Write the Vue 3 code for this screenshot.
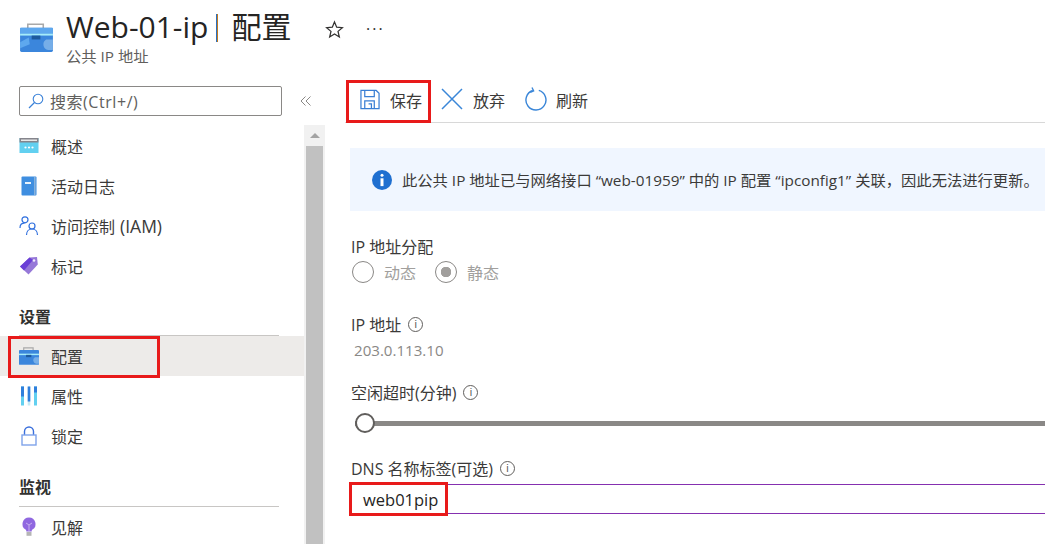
<script setup>
const topItems = [
  { label: '概述', icon: 'overview' },
  { label: '活动日志', icon: 'log' },
  { label: '访问控制', suffix: '(IAM)', icon: 'iam' },
  { label: '标记', icon: 'tag' }
]
const settings = [
  { label: '配置', icon: 'config', active: true },
  { label: '属性', icon: 'props' },
  { label: '锁定', icon: 'lock' }
]
</script>

<template>
  <div class="page">
    <header class="head">
      <svg class="head-icon" viewBox="0 0 34 30">
        <path d="M8 6V1.200h16V6" fill="none" stroke="#a9a9a9" stroke-width="1.600" />
        <rect x="0" y="5" width="34" height="25" rx="1.500" fill="#3b86dc" />
        <rect x="0" y="5" width="34" height="6" fill="#5ea8ee" />
        <rect x="0" y="11" width="34" height="2" fill="#a5ecfa" />
        <path d="M27 17h7v11h-5a6 6 0 0 1-2-11z" fill="#76aee8" />
        <path d="M0 20l9-5 1 7-10 4z" fill="#5ea8ee" />
        <rect x="12" y="13" width="9" height="4" fill="#1d5a9e" />
      </svg>
      <div class="head-text">
        <h1 class="title">Web-01-ip<span class="bar"></span>配置</h1>
        <div class="subtitle">公共 IP 地址</div>
      </div>
      <svg class="star" viewBox="0 0 20 20">
        <path d="M10 2l2.300 5.600 6 .5-4.600 3.900 1.400 5.900L10 14.800l-5.100 3.100 1.400-5.900L1.700 8.100l6-.5z" fill="none" stroke="#323130" stroke-width="1.300" />
      </svg>
      <span class="more">···</span>
    </header>

    <div class="body">
      <aside class="side">
        <div class="search-row">
          <div class="search">
            <svg class="search-icon" viewBox="0 0 16 16">
              <circle cx="10" cy="6" r="4.800" fill="none" stroke="#3b82d8" stroke-width="1.100" />
              <path d="M6.500 9.500L1 15" stroke="#3b82d8" stroke-width="1.200" />
            </svg>
            <span>搜索(Ctrl+/)</span>
          </div>
          <svg class="collapse" viewBox="0 0 12 12">
            <path d="M5.500 1.500L1 6l4.500 4.500M10.500 1.500L6 6l4.500 4.500" fill="none" stroke="#8a8886" stroke-width="1" />
          </svg>
        </div>
        <div class="side-low">
          <nav class="nav">
            <a v-for="it in topItems" :key="it.label" class="item">
              <span class="ic">
                <svg v-if="it.icon === 'overview'" width="20" height="20" viewBox="0 0 20 20">
                  <rect x="0.500" y="2" width="19" height="15" fill="#62d0f0" />
                  <rect x="0.500" y="2" width="19" height="4.500" fill="#85858c" />
                  <rect x="2" y="3.500" width="16" height="1.500" fill="#e8e8e8" />
                  <circle cx="6.500" cy="11.500" r="1.100" fill="#fff" /><circle cx="10" cy="11.500" r="1.100" fill="#fff" /><circle cx="13.500" cy="11.500" r="1.100" fill="#fff" />
                </svg>
                <svg v-else-if="it.icon === 'log'" width="20" height="20" viewBox="0 0 20 20">
                  <rect x="2.500" y="0.500" width="15" height="19" rx="1" fill="#3f8ee0" />
                  <path d="M15.800 1v18" stroke="#8fb6dc" stroke-width="1.400" />
                  <rect x="6" y="6" width="6" height="2" fill="#e8f2fb" />
                </svg>
                <svg v-else-if="it.icon === 'iam'" width="20" height="20" viewBox="0 0 20 20">
                  <g fill="none" stroke="#2f6fde" stroke-width="1.200">
                    <circle cx="6" cy="3.800" r="3" /><circle cx="13" cy="10" r="3" />
                    <path d="M1 12c0-3 2-4.800 4.500-4.800M7.500 19c0-3.500 2.300-6 5.500-6s5.500 2.500 5.500 6" />
                  </g>
                </svg>
                <svg v-else width="20" height="20" viewBox="0 0 20 20">
                  <path d="M1 10.500L10.500 1.500 18 1l.8 7.500L9.500 18.500z" fill="#9678d8" />
                  <path d="M1 10.500L10.500 1.500 14 4 5 14.500z" fill="#6a3fd6" />
                  <circle cx="15" cy="4.500" r="1.300" fill="#efe9fb" />
                </svg>
              </span>
              <span>{{ it.label }}</span>
              <span v-if="it.suffix" class="lat">{{ it.suffix }}</span>
            </a>

            <div class="section first">设置</div>
            <a v-for="it in settings" :key="it.label" class="item" :class="{ active: it.active }">
              <span class="ic">
                <svg v-if="it.icon === 'config'" width="20" height="18" viewBox="0 0 34 30">
                  <path d="M8 6V1.200h16V6" fill="none" stroke="#a9a9a9" stroke-width="2" />
                  <rect x="0" y="5" width="34" height="25" rx="1.500" fill="#3b86dc" />
                  <rect x="0" y="11" width="34" height="2.500" fill="#a5ecfa" />
                  <path d="M27 17h7v11h-5a6 6 0 0 1-2-11z" fill="#76aee8" />
                  <rect x="12" y="13" width="9" height="4" fill="#1d5a9e" />
                </svg>
                <svg v-else-if="it.icon === 'props'" width="20" height="20" viewBox="0 0 20 20">
                  <rect x="2" y="0.500" width="3" height="19" fill="#62d0f0" /><rect x="2" y="0.500" width="3" height="10" fill="#2f7fdc" />
                  <rect x="8.700" y="0.500" width="2.600" height="19" fill="#c5e9f5" /><rect x="8.700" y="0.500" width="2.600" height="15" fill="#2f7fdc" />
                  <rect x="15" y="0.500" width="3" height="19" fill="#62d0f0" /><rect x="15" y="0.500" width="3" height="6" fill="#2f7fdc" />
                </svg>
                <svg v-else width="20" height="20" viewBox="0 0 20 20">
                  <path d="M5.500 9V5.500a4.500 4.500 0 0 1 9 0V9" fill="none" stroke="#3a6fdc" stroke-width="1.400" />
                  <rect x="3" y="9" width="14" height="10" fill="#fff" stroke="#7fa3ea" stroke-width="1.400" />
                </svg>
              </span>
              <span>{{ it.label }}</span>
              <i v-if="it.active" class="red red-nav"></i>
            </a>

            <div class="section second">监视</div>
            <a class="item">
              <span class="ic">
                <svg width="20" height="20" viewBox="0 0 20 20">
                  <path d="M10 .5a6.500 6.500 0 0 0-3.500 12c.6.400.8 1 .8 2h5.400c0-1 .2-1.600.8-2A6.500 6.500 0 0 0 10 .5z" fill="#9068e0" />
                  <path d="M7 6l3 2 3-2M10 8v6" fill="none" stroke="#cdb8f0" stroke-width=".9" />
                  <rect x="7.500" y="15" width="5" height="3.800" fill="#b5b5b5" />
                </svg>
              </span>
              <span>见解</span>
            </a>
          </nav>
          <div class="scrollbar">
            <div class="arrow"><i></i></div>
            <div class="thumb"></div>
          </div>
        </div>
      </aside>

      <main class="main">
        <div class="toolbar">
          <button class="tool save">
            <svg width="20" height="21" viewBox="0 0 21 21">
              <g fill="none" stroke="#3a7fd4" stroke-width="1.300">
                <path d="M1 1h16l3 3v16H1z" /><path d="M5 1v6.500h10V1M5 20v-8h10v8M9 15h3v5" />
              </g>
            </svg>
            <span class="tool-text">保存</span>
            <i class="red red-save"></i>
          </button>
          <button class="tool">
            <svg width="22" height="22" viewBox="0 0 22 22">
              <path d="M1 1l20 20M21 1L1 21" stroke="#3a86d8" stroke-width="1.500" />
            </svg>
            <span class="tool-text">放弃</span>
          </button>
          <button class="tool refresh">
            <svg width="22" height="24" viewBox="0 0 22 24">
              <path d="M13.800 3.400a10 10 0 1 1-6 .1" fill="none" stroke="#3a86d8" stroke-width="1.400" />
              <path d="M7 0.500l1.600 3.300-3.300 1.500" fill="none" stroke="#3a86d8" stroke-width="1.400" />
            </svg>
            <span class="tool-text">刷新</span>
          </button>
        </div>

        <div class="content">
          <div class="info">
            <svg width="20" height="20" viewBox="0 0 20 20">
              <circle cx="10" cy="10" r="10" fill="#1f6fd0" />
              <circle cx="10" cy="5.300" r="1.500" fill="#fff" />
              <rect x="8.500" y="8.300" width="3" height="7.800" fill="#fff" />
            </svg>
            <span class="info-text">此公共 IP 地址已与网络接口 “web-01959” 中的 IP 配置 “ipconfig1” 关联，因此无法进行更新。</span>
          </div>

          <label class="field-label l-alloc">IP 地址分配</label>
          <div class="radios">
            <span class="radio"><i class="dot"></i>动态</span>
            <span class="radio"><i class="dot on"></i>静态</span>
          </div>

          <label class="field-label l-ip">IP 地址 <i class="tip">i</i></label>
          <div class="ip-value">203.0.113.10</div>

          <label class="field-label l-idle">空闲超时(分钟) <i class="tip">i</i></label>
          <div class="slider"><i class="knob"></i></div>

          <label class="field-label l-dns">DNS 名称标签(可选) <i class="tip">i</i></label>
          <div class="dns-input">
            <span>web01pip</span>
            <i class="red red-dns"></i>
          </div>
        </div>
      </main>
    </div>
  </div>
</template>

<style>
html, body { margin: 0; background: #fff; }
</style>

<style scoped>
.page {
  width: 1045px;
  height: 544px;
  overflow: hidden;
  background: #fff;
  color: #323130;
  font-family: "Open Sans", "Noto Sans CJK SC", sans-serif;
  font-size: 16px;
}
.head {
  height: 76px;
  display: flex;
  align-items: flex-start;
  padding-left: 20px;
  box-sizing: border-box;
}
.head-icon { width: 33px; height: 29px; margin-top: 23px; flex: none; }
.head-text { margin-left: 13px; width: 250px; flex: none; }
.title {
  margin: 8px 0 0;
  font-size: 30px;
  line-height: 38px;
  font-weight: 400;
  color: #252423;
  white-space: nowrap;
}
.bar { display: inline-block; width: 2px; height: 28px; background: linear-gradient(90deg, #2a6fc0 50%, #c07a20 50%); vertical-align: -4px; margin: 0 13px 0 8px; }
.subtitle { font-size: 15.300px; line-height: 20px; color: #605e5c; }
.star { width: 19px; height: 19px; margin: 20px 0 0 9px; flex: none; }
.more { margin: 19px 0 0 22px; font-size: 16px; line-height: 20px; letter-spacing: 2px; color: #323130; }

.body { display: flex; height: 468px; }
.side { width: 325px; flex: none; display: flex; flex-direction: column; }
.search-row { height: 49px; padding: 10px 0 0 19px; box-sizing: border-box; display: flex; align-items: flex-start; }
.search {
  width: 263px;
  height: 30px;
  box-sizing: border-box;
  border: 1px solid #8a8886;
  border-radius: 2px;
  display: flex;
  align-items: center;
  padding-left: 8px;
  color: #605e5c;
  font-size: 16px;
  letter-spacing: .55px;
  gap: 6px;
}
.search-icon { width: 16px; height: 16px; flex: none; }
.collapse { width: 12px; height: 12px; margin: 9px 0 0 18px; flex: none; }
.side-low { flex: 1; display: flex; min-height: 0; }
.nav { width: 304px; flex: none; padding-top: 1px; box-sizing: border-box; }
.item {
  position: relative;
  height: 40px;
  display: flex;
  align-items: center;
  padding-left: 19px;
  font-size: 16px;
  color: #3b3a39;
}
.lat { font-size: 17.500px; margin-left: 5px; }
.item.active { background: #edebe9; }
.ic { width: 20px; height: 20px; display: flex; align-items: center; justify-content: center; margin-right: 12px; flex: none; }
.section {
  margin: 0 25px 0 19px;
  border-bottom: 1px solid #c8c6c4;
  font-weight: 600;
  font-size: 16px;
  display: flex;
  align-items: flex-end;
  box-sizing: border-box;
  color: #323130;
}
.section.first { height: 50px; padding-bottom: 7px; }
.section.second { height: 51px; padding-bottom: 8px; }
.scrollbar { width: 21px; background: #f1f1f1; flex: none; display: flex; flex-direction: column; align-items: center; }
.arrow { height: 21px; display: flex; align-items: center; justify-content: center; }
.arrow i { width: 0; height: 0; border: 5px solid transparent; border-top: 0; border-bottom: 5px solid #a3a3a3; }
.thumb { width: 17px; flex: 1; background: #c1c1c1; }

.main { flex: 1; min-width: 0; padding-left: 20px; overflow: hidden; }
.toolbar {
  height: 47px;
  box-sizing: border-box;
  border-bottom: 1px solid #d8d8d8;
  display: flex;
  align-items: center;
}
.tool {
  position: relative;
  display: flex;
  align-items: center;
  gap: 10px;
  border: 0;
  padding: 0;
  background: none;
  font: inherit;
  font-size: 16px;
  color: #3b3a39;
  margin-left: 20px;
}
.tool-text { padding-top: 2px; }
.tool.save { margin-left: 15px; }
.tool:nth-child(2) { margin-left: 19px; }
.tool.refresh { gap: 9px; }
.content { padding: 25px 0 0 5px; }
.info {
  width: 700px;
  height: 63px;
  display: flex;
  align-items: center;
  background: #f0f6ff;
  padding-left: 22px;
  box-sizing: border-box;
  font-size: 15.300px;
  color: #3b3a39;
  gap: 10px;
  white-space: nowrap;
}
.info-text { margin-top: -2px; }
.field-label { display: flex; align-items: center; height: 22px; margin-left: 1px; font-size: 16px; color: #3b3a39; gap: 7px; white-space: nowrap; }
.l-alloc { margin-top: 24px; }
.l-ip { margin-top: 28px; }
.l-idle { margin-top: 21px; }
.l-dns { margin-top: 31px; }
.tip {
  width: 15px;
  height: 15px;
  box-sizing: border-box;
  border: 1px solid #605e5c;
  border-radius: 50%;
  font: normal 11px/13px "Liberation Sans", sans-serif;
  text-align: center;
  color: #605e5c;
  flex: none;
}
.radios { display: flex; height: 26px; align-items: center; margin-left: 2px; gap: 19px; color: #a19f9d; font-size: 16px; margin-top: 2px; }
.radio { display: flex; align-items: center; gap: 10px; }
.dot { width: 22px; height: 22px; box-sizing: border-box; border: 1px solid #8a8886; border-radius: 50%; display: block; }
.dot.on { background: radial-gradient(circle, #a19f9d 0 5px, #fff 5.500px); }
.ip-value { color: #8a8886; font-size: 15.100px; line-height: 20px; margin: 5px 0 0 4px; }
.slider { position: relative; height: 5px; margin: 18px 0 0 5px; background: #8a8886; width: 700px; }
.knob {
  position: absolute;
  left: 0;
  top: -8px;
  width: 20px;
  height: 20px;
  box-sizing: border-box;
  background: #fff;
  border: 2.500px solid #605e5c;
  border-radius: 50%;
}
.dns-input {
  position: relative;
  height: 30px;
  box-sizing: border-box;
  margin-top: 5px;
  width: 700px;
  border-top: 1px solid #8530b0;
  border-bottom: 1px solid #8530b0;
  display: flex;
  align-items: center;
  padding-left: 13px;
  font-size: 16.500px;
  color: #252423;
}
.red { position: absolute; box-sizing: border-box; border: 3px solid #e81a1a; pointer-events: none; display: block; }
.red-nav { left: 8px; top: 0; width: 152px; height: 42px; }
.red-save { left: -14px; top: -6px; width: 85px; height: 43px; }
.red-dns { left: -1px; top: -3px; width: 99px; height: 34px; }
</style>
